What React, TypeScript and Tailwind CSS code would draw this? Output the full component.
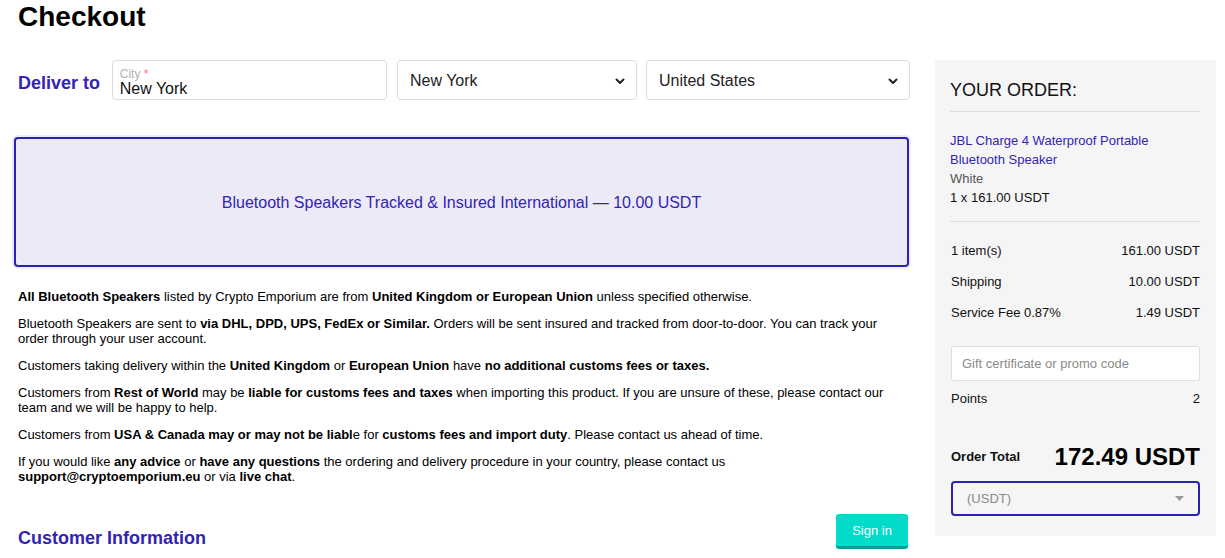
import React from "react";

const Chevron = () => (
  <svg width="10" height="7" viewBox="0 0 10 7" className="shrink-0">
    <path d="M1.5 1.5 L5 5 L8.5 1.5" fill="none" stroke="#222" strokeWidth="2" strokeLinecap="round" strokeLinejoin="round" />
  </svg>
);

const FakeSelect = ({ value, width }: { value: string; width: string }) => (
  <div className={`${width} h-[40px] border border-[#dcdcdc] rounded-[4px] bg-white flex items-center justify-between pl-[12px] pr-[11px] pt-[2px]`}>
    <span className="text-[16px] text-[#222]">{value}</span>
    <Chevron />
  </div>
);

export default function App() {
  return (
    <div className="w-[1225px] h-[558px] overflow-hidden bg-white text-black font-['Liberation_Sans',Arial,sans-serif]">
      <h1 className="pl-[18px] pt-[1px] text-[28px] leading-[32px] font-bold">Checkout</h1>
      <div className="flex mt-[27px]">
        {/* Left column */}
        <div className="w-[892px] ml-[18px]">
          <div className="flex items-center h-[40px]">
            <span className="w-[94px] text-[18px] font-bold text-[#3224b5] mt-[6px]">Deliver to</span>
            <div className="w-[276px] h-[40px] border border-[#dcdcdc] rounded-[4px] bg-white pl-[7px] pt-[6px] flex flex-col justify-center">
              <span className="text-[12px] leading-[12px] text-[#b0b0b0] mt-[-1px]">
                City <span className="text-[#f77]">*</span>
              </span>
              <span className="text-[16px] leading-[18px] text-[#111]">New York</span>
            </div>
            <div className="ml-[10px]">
              <FakeSelect value="New York" width="w-[240px]" />
            </div>
            <div className="ml-[9px]">
              <FakeSelect value="United States" width="w-[264px]" />
            </div>
          </div>

          <div className="ml-[-4px] w-[895px] h-[130px] mt-[37px] rounded-[4px] border-2 border-[#2a22b3] bg-[#eceaf6] ring-2 ring-[#eeecfa] flex items-center justify-center pt-[2px]">
            <span className="text-[16px] text-[#3224b5]">Bluetooth Speakers Tracked &amp; Insured International — 10.00 USDT</span>
          </div>

          <div className="mt-[22px] text-[13px] leading-[15px] flex flex-col gap-[12px] pr-[10px]">
            <p>
              <b>All Bluetooth Speakers</b> listed by Crypto Emporium are from <b>United Kingdom or European Union</b> unless specified otherwise.
            </p>
            <p>
              Bluetooth Speakers are sent to <b>via DHL, DPD, UPS, FedEx or Similar.</b> Orders will be sent insured and tracked from door-to-door. You can track your order through your user account.
            </p>
            <p>
              Customers taking delivery within the <b>United Kingdom</b> or <b>European Union</b> have <b>no additional customs fees or taxes.</b>
            </p>
            <p>
              Customers from <b>Rest of World</b> may be <b>liable for customs fees and taxes</b> when importing this product. If you are unsure of these, please contact our team and we will be happy to help.
            </p>
            <p>
              Customers from <b>USA &amp; Canada may or may not be liabl</b>e for <b>customs fees and import duty</b>. Please contact us ahead of time.
            </p>
            <p>
              If you would like <b>any advice</b> or <b>have any questions</b> the ordering and delivery procedure in your country, please contact us<br />
              <b>support@cryptoemporium.eu</b> or via <b>live chat</b>.
            </p>
          </div>

          <div className="flex items-end justify-between mt-[30px] pr-[2px]">
            <span className="text-[18px] font-bold text-[#3224b5] leading-[20px] mb-[1px]">Customer Information</span>
            <button className="w-[72px] h-[35px] rounded-[3px] bg-[#00dcc8] border-b-[3px] border-[#00a393] text-white text-[13px] pt-[1px]">Sign in</button>
          </div>
        </div>

        {/* Right panel */}
        <div className="ml-[25px] w-[281px] h-[476px] bg-[#f5f5f5] pl-[15px] pr-[16px] pt-[20px]">
          <div className="text-[18px] leading-[20px] text-[#111] pb-[11px] border-b border-[#dedede]">YOUR ORDER:</div>
          <div className="pt-[19px] pb-[14px] border-b border-[#dedede] text-[13px] leading-[19px]">
            <div className="text-[#3224b5]">JBL Charge 4 Waterproof Portable<br />Bluetooth Speaker</div>
            <div className="text-[#555]">White</div>
            <div className="text-[#111]">1 x 161.00 USDT</div>
          </div>
          <div className="pt-[13px] text-[13px] text-[#111] pl-[1px]">
            <div className="h-[31px] flex items-center justify-between"><span>1 item(s)</span><span>161.00 USDT</span></div>
            <div className="h-[31px] flex items-center justify-between"><span>Shipping</span><span>10.00 USDT</span></div>
            <div className="h-[31px] flex items-center justify-between"><span>Service Fee 0.87%</span><span>1.49 USDT</span></div>
          </div>
          <div className="mt-[18px] ml-[1px] h-[35px] bg-white border border-[#dedede] rounded-[3px] flex items-center pl-[10px] text-[13px] text-[#8a8a8a]">
            Gift certificate or promo code
          </div>
          <div className="mt-[8px] h-[20px] flex items-center justify-between text-[13px] text-[#111] pl-[1px]">
            <span>Points</span><span>2</span>
          </div>
          <div className="mt-[33px] h-[30px] flex items-center justify-between pl-[1px]">
            <span className="text-[13px] font-bold text-[#111]">Order Total</span>
            <span className="text-[24px] font-bold text-black">172.49 USDT</span>
          </div>
          <div className="mt-[9px] ml-[1px] h-[35px] border-2 border-[#2a22b3] rounded-[4px] flex items-center justify-between pl-[14px] pr-[14px]">
            <span className="text-[13px] text-[#8a8a8a]">(USDT)</span>
            <svg width="9" height="5" viewBox="0 0 9 5"><path d="M0 0 L9 0 L4.5 5 Z" fill="#999" /></svg>
          </div>
        </div>
      </div>
    </div>
  );
}
